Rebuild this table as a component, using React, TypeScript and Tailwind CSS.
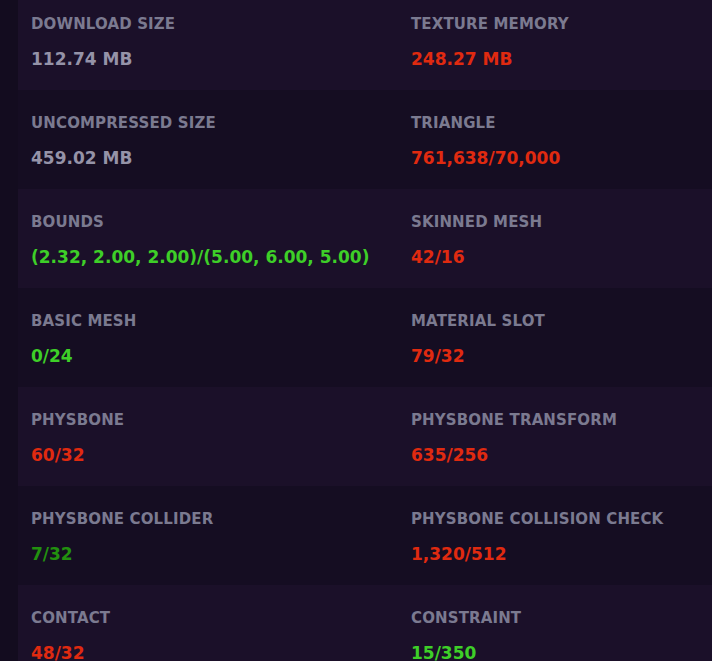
import React from "react";

type Cell = { label: string; value: string; color: string };

const GREY = "text-[#9593a8]";
const RED = "text-[#e02a10]";
const GREEN = "text-[#3ecf28]";
const DGREEN = "text-[#22900f]";

const rows: [Cell, Cell][] = [
  [
    { label: "DOWNLOAD SIZE", value: "112.74 MB", color: GREY },
    { label: "TEXTURE MEMORY", value: "248.27 MB", color: RED },
  ],
  [
    { label: "UNCOMPRESSED SIZE", value: "459.02 MB", color: GREY },
    { label: "TRIANGLE", value: "761,638/70,000", color: RED },
  ],
  [
    { label: "BOUNDS", value: "(2.32, 2.00, 2.00)/(5.00, 6.00, 5.00)", color: GREEN },
    { label: "SKINNED MESH", value: "42/16", color: RED },
  ],
  [
    { label: "BASIC MESH", value: "0/24", color: GREEN },
    { label: "MATERIAL SLOT", value: "79/32", color: RED },
  ],
  [
    { label: "PHYSBONE", value: "60/32", color: RED },
    { label: "PHYSBONE TRANSFORM", value: "635/256", color: RED },
  ],
  [
    { label: "PHYSBONE COLLIDER", value: "7/32", color: DGREEN },
    { label: "PHYSBONE COLLISION CHECK", value: "1,320/512", color: RED },
  ],
  [
    { label: "CONTACT", value: "48/32", color: RED },
    { label: "CONSTRAINT", value: "15/350", color: GREEN },
  ],
];

function CellView({ c }: { c: Cell }) {
  return (
    <div className="pl-[13px] pt-[24px] whitespace-nowrap">
      <div className="text-[15px] leading-[18px] font-bold tracking-[0.13px] text-[#7b7a90]">{c.label}</div>
      <div className={`mt-[16px] text-[17px] leading-[20px] font-bold ${c.color}`}>{c.value}</div>
    </div>
  );
}

export default function App() {
  return (
    <div
      className="w-[712px] h-[661px] overflow-hidden bg-[#130c1f] pl-[18px]"
      style={{ fontFamily: '"DejaVu Sans", Verdana, sans-serif' }}
    >
      <div className="-mt-[9px] flex flex-col">
        {rows.map((r, i) => (
          <div
            key={i}
            className={`grid grid-cols-[380px_1fr] h-[99px] ${i % 2 === 0 ? "bg-[#1b1029]" : "bg-[#150d22]"}`}
          >
            <CellView c={r[0]} />
            <CellView c={r[1]} />
          </div>
        ))}
      </div>
    </div>
  );
}
